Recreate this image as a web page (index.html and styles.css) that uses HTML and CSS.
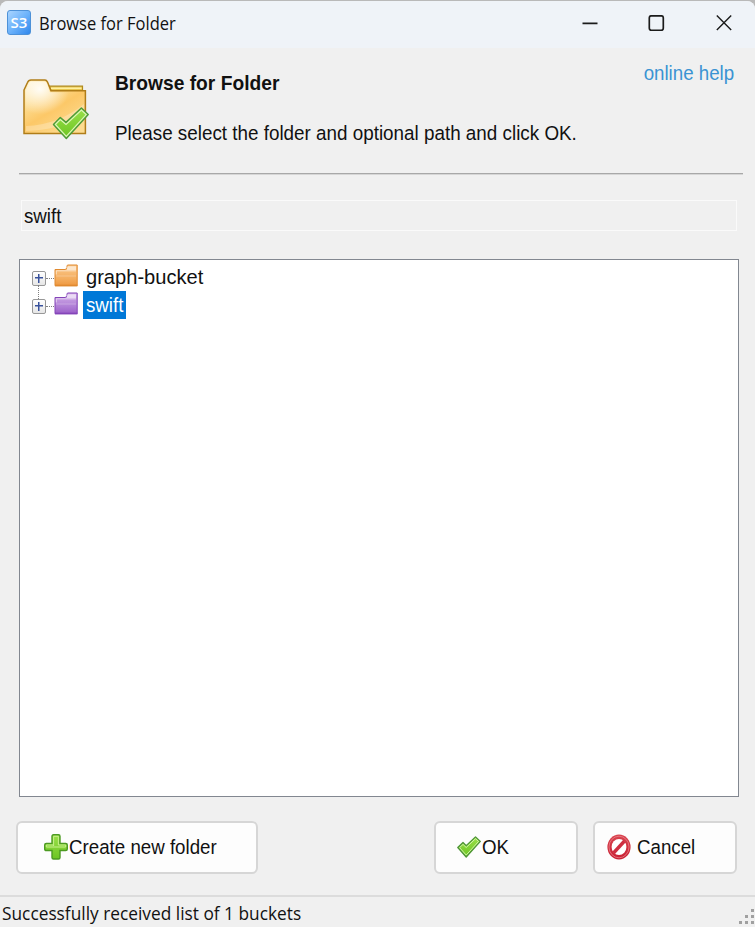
FILE: index.html
```
<!DOCTYPE html>
<html lang="en">
<head>
    <meta charset="UTF-8">
    <meta name="viewport" content="width=device-width, initial-scale=1.0">
    <title>Browse for Folder</title>
    <link rel="stylesheet" href="styles.css">
</head>
<body>
    <!-- shared gradients and icons -->
    <svg class="defs" width="0" height="0">
        <defs>
            <linearGradient id="orange" x1="0" y1="0" x2="0" y2="1">
                <stop offset="0" stop-color="#fbc98c"/>
                <stop offset="0.65" stop-color="#f4ae60"/>
                <stop offset="1" stop-color="#ee9840"/>
            </linearGradient>
            <linearGradient id="purple" x1="0" y1="0" x2="0" y2="1">
                <stop offset="0" stop-color="#d3b0e8"/>
                <stop offset="0.65" stop-color="#b07fd6"/>
                <stop offset="1" stop-color="#9a5dc8"/>
            </linearGradient>
            <linearGradient id="gold" x1="0" y1="0" x2="0.7" y2="1">
                <stop offset="0" stop-color="#fff3cf"/>
                <stop offset="0.3" stop-color="#fddf96"/>
                <stop offset="0.6" stop-color="#fcc868"/>
                <stop offset="1" stop-color="#fddb90"/>
            </linearGradient>
            <radialGradient id="shine" cx="0.25" cy="0.15" r="0.5">
                <stop offset="0" stop-color="#fff" stop-opacity="0.9"/>
                <stop offset="1" stop-color="#fff" stop-opacity="0"/>
            </radialGradient>
            <linearGradient id="green" x1="0" y1="0" x2="0" y2="1">
                <stop offset="0" stop-color="#9be04a"/>
                <stop offset="1" stop-color="#6cc522"/>
            </linearGradient>
            <linearGradient id="red" x1="0" y1="0" x2="0" y2="1">
                <stop offset="0" stop-color="#d9444f"/>
                <stop offset="1" stop-color="#c81f33"/>
            </linearGradient>
        </defs>
        <symbol id="folder" viewBox="0 0 24 23">
            <path d="M1 5.5H11.5L13 3.5V2Q13 1 14 1H23.2V21.7H1Z"/>
            <path d="M14 2.2H22V6H13V4Q13 2.3 14 2.2Z" fill="#fff" fill-opacity="0.6" stroke="none"/>
            <path d="M2.3 10.5V6.8H22" fill="none" stroke="#fff" stroke-opacity="0.55"/>
            <path d="M2 12H22" fill="none" stroke="#fff" stroke-opacity="0.25"/>
            <path d="M1 21.5H23.4" fill="none" stroke-width="1.6"/>
        </symbol>
    </svg>

    <div class="window">
        <header class="titlebar">
            <span class="app-icon">S3</span>
            <span class="title"><span class="narrow">Browse for Folder</span></span>
            <svg class="controls" width="150" height="16" viewBox="0 0 150 16">
                <path d="M0.5 8.4H15.5"/>
                <rect x="67.3" y="0.8" width="14" height="14.5" rx="2"/>
                <path d="M134.8 0.6L149.2 15M149.2 0.6L134.8 15" stroke-width="1.4"/>
            </svg>
        </header>

        <section class="intro">
            <svg class="big-folder" width="68" height="62" viewBox="0 0 68 62">
                <path d="M26 7.2H59.5V16H30Z" fill="#e8c650" stroke="#b18a1c" stroke-width="1.2"/>
                <path d="M28 9.3H58.5" stroke="#fff0a0" stroke-width="1.4"/>
                <path d="M1 11L4.5 3.5Q5.5 1 8 1H22Q23.5 1 24.5 3L28 11.8H62.4V54.5H1Z" fill="url(#gold)" stroke="#b07d18" stroke-width="1.5"/>
                <path d="M2.5 12L6 4Q7 2.5 8.5 2.5H21Q23 2.5 24 4.5L27 13.2H61V53H2.5Z" fill="url(#shine)"/>
                <path d="M3 47Q35 46 61 25V37Q35 51 3 52Z" fill="#fff" fill-opacity="0.25"/>
                <path d="M30.5 45.5L37.3 38.5L43 43.4L58.4 29L65.2 35.5L43.3 59.5Z" fill="url(#green)" stroke="#4e9a3a" stroke-width="1.5" stroke-linejoin="round"/>
                <path d="M32.4 45.5L37.3 40.5L43 45.4L58.4 31L63.2 35.6L43.3 57.4Z" fill="none" stroke="#dcf5b8" stroke-width="1.2"/>
            </svg>
            <div class="intro-text">
                <h1><span class="narrow">Browse for Folder</span></h1>
                <p><span class="narrow">Please select the folder and optional path and click OK.</span></p>
            </div>
            <a class="help"><span class="narrow">online help</span></a>
        </section>

        <hr>

        <div class="path"><span class="narrow">swift</span></div>

        <ul class="tree">
            <li>
                <span class="toggle"></span>
                <span class="dots"></span>
                <svg class="folder orange" width="24" height="23"><use href="#folder"/></svg>
                <span class="label wide"><span class="narrow">graph-bucket</span></span>
            </li>
            <li>
                <span class="toggle"></span>
                <span class="dots"></span>
                <svg class="folder purple" width="24" height="23"><use href="#folder"/></svg>
                <span class="label selected"><span class="narrow">swift</span></span>
            </li>
        </ul>

        <div class="actions">
            <button type="button" class="create">
                <svg width="24" height="26" viewBox="0 0 24 26">
                    <path d="M9.5 0.8H14.5Q16 0.8 16 2.3V9.5H21.7Q23.3 9.5 23.3 11V15Q23.3 16.5 21.7 16.5H16V23.5Q16 25 14.5 25H9.5Q8 25 8 23.5V16.5H2.3Q0.7 16.5 0.7 15V11Q0.7 9.5 2.3 9.5H8V2.3Q8 0.8 9.5 0.8Z" fill="url(#green)" stroke="#4c9a22" stroke-width="1.4"/>
                    <path d="M9.6 12V2.3H14.4V11H21.7V13H2.3V11H9.6" fill="none" stroke="#c8f08c" stroke-width="1"/>
                </svg>
                <span class="narrow">Create new folder</span>
            </button>
            <button type="button" class="ok">
                <svg width="24" height="22" viewBox="0 0 24 22">
                    <path d="M0.8 11.5L6 6.5L9.2 9.6L18.5 0.9L23.3 5.4L9.2 21Z" fill="url(#green)" stroke="#4e9438" stroke-width="1.3" stroke-linejoin="round"/>
                    <path d="M2.6 11.6L6 8.4L9.2 11.5L18.5 2.7L21.5 5.5L9.2 19.1Z" fill="none" stroke="#d9f7b0" stroke-width="0.9"/>
                </svg>
                <span class="narrow">OK</span>
            </button>
            <button type="button" class="cancel">
                <svg width="24" height="26" viewBox="0 0 24 26">
                    <ellipse cx="12" cy="13" rx="11.6" ry="12.5" fill="url(#red)"/>
                    <ellipse cx="12" cy="13" rx="10" ry="10.8" fill="none" stroke="#e98089" stroke-width="0.8"/>
                    <ellipse cx="12" cy="13" rx="7.4" ry="8" fill="#fff"/>
                    <path d="M6.5 19L17.5 7" stroke="#cf2e40" stroke-width="3.4"/>
                </svg>
                <span class="narrow">Cancel</span>
            </button>
        </div>

        <footer class="status">
            <span class="narrow">Successfully received list of 1 buckets</span>
            <svg class="grip" width="16" height="16" viewBox="0 0 16 16">
                <path d="M12 0h3v3h-3zM6 6h3v3h-3zM12 6h3v3h-3zM0 12h3v3h-3zM6 12h3v3h-3zM12 12h3v3h-3z"/>
            </svg>
        </footer>
    </div>
</body>
</html>
```
FILE: styles.css
```
:root {
    --bg-color: #f0f0f0;
    --titlebar-bg: #eff3f8;
    --text-color: #111;
    --link-color: #3a93d3;
    --select-color: #0078d7;
    --tree-border: #828790;
    --button-border: #d6d6d6;
}

* {
    box-sizing: border-box;
}

body {
    margin: 0;
    background-color: #b9b9b9;
    font-family: "Liberation Sans", Arial, sans-serif;
    font-size: 20.5px;
    line-height: 24px;
    color: var(--text-color);
    overflow: hidden;
}

.defs {
    position: absolute;
}

.window {
    display: flex;
    flex-direction: column;
    height: 926px;
    margin-top: 1px;
    background-color: var(--bg-color);
    border-radius: 8px 8px 0 0;
    overflow: hidden;
}

/* condensed text */
.narrow {
    display: inline-block;
    white-space: nowrap;
    transform: scaleX(0.913);
    transform-origin: left center;
}

.titlebar {
    display: flex;
    align-items: center;
    height: 47px;
    padding: 0 23px 4px 7px;
    background-color: var(--titlebar-bg);
}

.app-icon {
    width: 24px;
    height: 25px;
    border: 1px solid #4d91d8;
    border-radius: 3px;
    background: linear-gradient(135deg, #a9d4ff, #6db3fb 50%, #2f87ec);
    color: #fff;
    font: 600 15px/22px "Open Sans", sans-serif;
    text-align: center;
}

.title {
    flex: 1;
    margin-left: 8px;
    font-family: "Open Sans", sans-serif;
    font-size: 18.5px;
}

.title .narrow {
    transform: scaleX(0.892);
}

.controls {
    fill: none;
    stroke: #1b1b1b;
    stroke-width: 1.7;
}

.intro {
    display: flex;
    height: 125px;
    padding: 0 21px 0 23px;
}

.big-folder {
    margin-top: 31px;
    fill: none;
}

.intro-text {
    flex: 1;
    margin-left: 24px;
}

h1 {
    margin: 23px 0 0;
    font-size: 20.5px;
    line-height: 24px;
}

h1 .narrow {
    transform: scaleX(0.937);
}

.intro-text p {
    margin: 26px 0 0;
}

.intro-text p .narrow {
    transform: scaleX(0.919);
}

.help {
    margin-top: 13px;
    color: var(--link-color);
}

.help .narrow {
    transform-origin: right center;
}

hr {
    width: 724px;
    height: 2px;
    margin: 0 0 0 19px;
    border: 0;
    border-top: 1px solid #a8a8a8;
    background-color: #d6d6d6;
}

.path {
    height: 31px;
    margin: 25px 18px 0 21px;
    padding: 3px 2px;
    line-height: 24px;
    border: 1px solid #fafafa;
}

.tree {
    height: 538px;
    margin: 28px 16px 0 19px;
    padding: 4px 0 0 12px;
    border: 1px solid var(--tree-border);
    background-color: #fff;
    list-style: none;
}

.tree li {
    display: flex;
    align-items: center;
    height: 28px;
    position: relative;
}

.tree li + li::before {
    content: "";
    position: absolute;
    left: 6px;
    top: -7px;
    height: 14px;
    border-left: 1px dotted #808080;
}

.toggle {
    width: 14px;
    height: 15px;
    border: 1px solid #989898;
    border-radius: 2px;
    background:
        linear-gradient(#39529c, #39529c) center / 8px 1.5px no-repeat,
        linear-gradient(#39529c, #39529c) center / 1.5px 9px no-repeat,
        linear-gradient(#fff, #e6e6e6);
}

.dots {
    width: 8px;
    border-top: 1px dotted #808080;
}

.folder.orange {
    fill: url(#orange);
    stroke: #e08a30;
}

.folder.purple {
    fill: url(#purple);
    stroke: #8445b8;
}

.folder {
    margin-top: -5px;
}

.label {
    width: 43px;
    height: 28px;
    margin: -1px 0 1px 5px;
    padding-left: 3px;
    line-height: 28px;
}

.wide .narrow {
    transform: scaleX(0.98);
}

.selected {
    background-color: var(--select-color);
    color: #fff;
}

.actions {
    display: flex;
    height: 53px;
    margin: 24px 18px 0 16px;
}

.actions button {
    display: flex;
    align-items: center;
    padding: 0 0 1px;
    border: 2px solid var(--button-border);
    border-radius: 6px;
    background-color: #fdfdfd;
    color: var(--text-color);
    font: inherit;
}

.actions .create {
    width: 242px;
    padding-left: 26px;
}

.actions .ok {
    width: 144px;
    margin-left: auto;
    padding-left: 21px;
}

.actions .cancel {
    width: 144px;
    margin-left: 15px;
    padding-left: 12px;
}

.create .narrow {
    margin-left: 1px;
}

.ok .narrow {
    margin-left: 1px;
}

.cancel .narrow {
    margin-left: 6px;
}

.status {
    display: flex;
    justify-content: space-between;
    flex: 1;
    margin-top: 21px;
    padding: 4px 0 0 2px;
    border-top: 2px solid #dcdcdc;
    font-family: "Open Sans", sans-serif;
    font-size: 18.5px;
}

.status .narrow {
    transform: scaleX(0.935);
}

.grip {
    margin: 8px 0 0;
    fill: #a0a0a0;
}
```
